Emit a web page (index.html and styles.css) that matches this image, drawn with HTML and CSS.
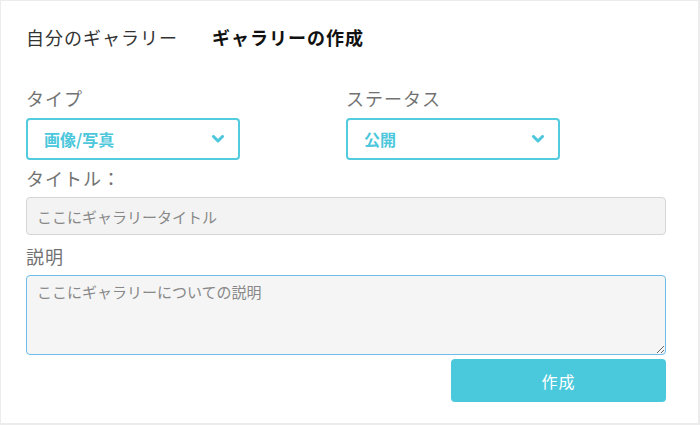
FILE: index.html
```html
<!DOCTYPE html>
<html lang="ja">
<head>
<meta charset="utf-8">
<link rel="stylesheet" href="styles.css">
</head>
<body>
<div class="page">
  <div class="tabs">
    <span class="tab">自分のギャラリー</span>
    <span class="tab active">ギャラリーの作成</span>
  </div>
  <div class="row">
    <div class="col">
      <div class="label">タイプ</div>
      <div class="select">
        <span>画像/写真</span>
        <svg class="chev" width="12" height="8" viewBox="0 0 12 8"><polyline points="1.5,1.5 6,6 10.5,1.5" fill="none" stroke="#4cc7db" stroke-width="3" stroke-linecap="round" stroke-linejoin="round"/></svg>
      </div>
    </div>
    <div class="col">
      <div class="label">ステータス</div>
      <div class="select">
        <span>公開</span>
        <svg class="chev" width="12" height="8" viewBox="0 0 12 8"><polyline points="1.5,1.5 6,6 10.5,1.5" fill="none" stroke="#4cc7db" stroke-width="3" stroke-linecap="round" stroke-linejoin="round"/></svg>
      </div>
    </div>
  </div>
  <div class="label l-title">タイトル：</div>
  <input class="input" type="text" placeholder="ここにギャラリータイトル">
  <div class="label l-desc">説明</div>
  <textarea class="textarea" placeholder="ここにギャラリーについての説明"></textarea>
  <div class="actions">
    <button class="btn">作成</button>
  </div>
</div>
</body>
</html>
```
FILE: styles.css
```css
html, body {
  margin: 0;
  padding: 0;
  background: #fff;
}
body {
  font-family: "Noto Sans CJK JP", "Noto Sans", sans-serif;
}
.page {
  width: 700px;
  height: 425px;
  box-sizing: border-box;
  border: 1px solid #ececec;
  border-right-width: 2px;
  border-bottom-width: 2px;
  padding: 0 33px 0 25px;
  display: flex;
  flex-direction: column;
}
.tabs {
  margin-top: 24px;
  height: 24px;
  display: flex;
  gap: 34px;
  font-size: 18px;
  line-height: 24px;
  letter-spacing: 1px;
}
.tab {
  color: #333;
}
.tab.active {
  color: #111;
  font-weight: 700;
}
.row {
  margin-top: 37px;
  display: grid;
  grid-template-columns: 320px 320px;
}
.col {
  display: flex;
  flex-direction: column;
}
.label {
  font-size: 18px;
  line-height: 24px;
  height: 24px;
  color: #727272;
  letter-spacing: 1px;
  font-weight: 400;
}
.select {
  margin-top: 8px;
  width: 214px;
  height: 42px;
  box-sizing: border-box;
  border: 2px solid #52cbde;
  border-radius: 4px;
  display: flex;
  align-items: center;
  justify-content: space-between;
  padding: 0 14px 0 16px;
  color: #4cc7db;
  font-weight: 700;
  font-size: 16px;
}
.chev {
  display: block;
}
.l-title {
  margin-top: 6px;
}
.input {
  margin-top: 7px;
  width: 640px;
  height: 38px;
  box-sizing: border-box;
  border: 1px solid #d6d6d6;
  border-radius: 4px;
  background: #f3f3f3;
  padding: 0 10px;
  font-family: inherit;
  font-size: 15px;
  color: #555;
  outline: none;
}
.input::placeholder,
.textarea::placeholder {
  color: #888;
}
.l-desc {
  margin-top: 9px;
}
.textarea {
  margin: 7px 0 0 0;
  width: 640px;
  height: 80px;
  box-sizing: border-box;
  border: 1px solid #6cbde9;
  border-radius: 4px;
  background: #f5f5f5;
  padding: 6px 10px;
  font-family: inherit;
  font-size: 15px;
  line-height: 20px;
  color: #555;
  outline: none;
  display: block;
}
.actions {
  margin-top: 4px;
  width: 640px;
  display: flex;
  justify-content: flex-end;
}
.btn {
  width: 215px;
  height: 43px;
  border: none;
  border-radius: 4px;
  background: #4bc9dc;
  color: #fff;
  font-family: inherit;
  font-size: 16px;
  letter-spacing: 1px;
}
```
